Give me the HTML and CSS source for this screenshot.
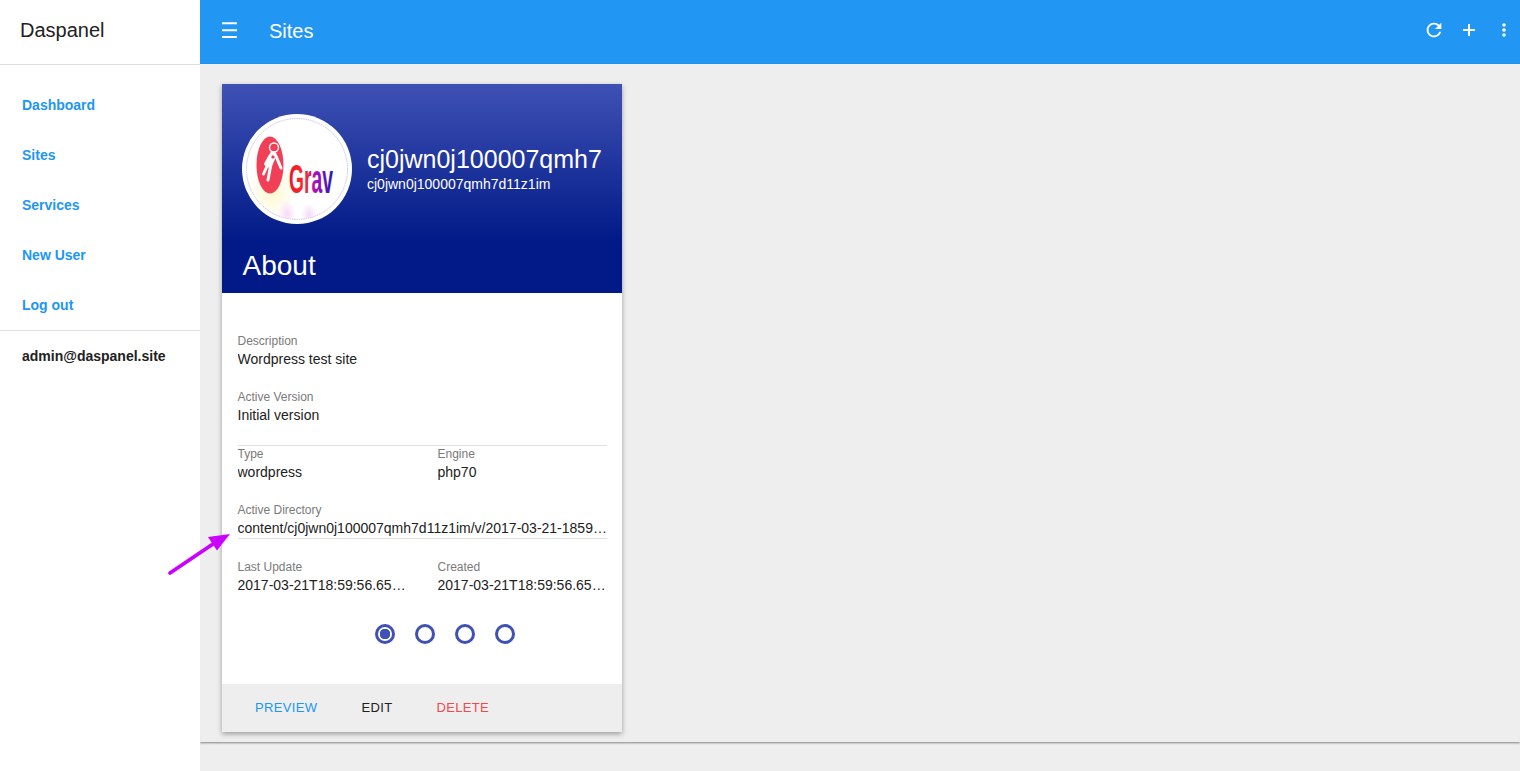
FILE: index.html
```html
<!DOCTYPE html>
<html lang="en">
<head>
<meta charset="utf-8">
<title>Daspanel - Sites</title>
<link rel="stylesheet" href="styles.css">
</head>
<body>
<div class="app">
  <aside class="sidebar">
    <div class="brand">Daspanel</div>
    <nav class="nav">
      <a class="nav-link">Dashboard</a>
      <a class="nav-link">Sites</a>
      <a class="nav-link">Services</a>
      <a class="nav-link">New User</a>
      <a class="nav-link">Log out</a>
    </nav>
    <div class="user">admin@daspanel.site</div>
  </aside>
  <div class="main">
    <header class="topbar">
      <svg class="menu-icon" width="15" height="16" viewBox="0 0 15 16"><path d="M0 1.200h15M0 8.300h15M0 15h15" stroke="#fff" stroke-width="1.900" fill="none"/></svg>
      <h1 class="title">Sites</h1>
      <div class="actions">
        <svg class="action-refresh" width="22" height="22" viewBox="0 0 24 24"><path fill="#fff" d="M17.65 6.35C16.2 4.9 14.21 4 12 4c-4.42 0-7.99 3.58-7.99 8s3.57 8 7.99 8c3.73 0 6.84-2.55 7.73-6h-2.08c-.82 2.33-3.04 4-5.65 4-3.31 0-6-2.69-6-6s2.69-6 6-6c1.66 0 3.14.69 4.22 1.78L13 11h7V4l-2.35 2.35z"/></svg>
        <svg class="action-add" width="12" height="12" viewBox="0 0 12 12"><path d="M0 6h12M6 0v12" stroke="#fff" stroke-width="2" fill="none"/></svg>
        <svg class="action-more" width="4" height="14" viewBox="0 0 4 14"><circle cx="2" cy="2" r="1.800" fill="#fff"/><circle cx="2" cy="7" r="1.800" fill="#fff"/><circle cx="2" cy="12" r="1.800" fill="#fff"/></svg>
      </div>
    </header>
    <section class="content">
      <article class="card">
        <div class="card-head">
          <div class="identity">
            <svg class="avatar" width="110" height="110" viewBox="0 0 110 110">
              <defs>
                <linearGradient id="gravText" x1="0" x2="1" y1="0" y2="0">
                  <stop offset="0" stop-color="#f0142c"/>
                  <stop offset=".35" stop-color="#f5302a"/>
                  <stop offset=".62" stop-color="#a010c8"/>
                  <stop offset="1" stop-color="#2a1aa8"/>
                </linearGradient>
                <radialGradient id="washY"><stop offset="0" stop-color="#fff7c0" stop-opacity=".8"/><stop offset="1" stop-color="#fff7c0" stop-opacity="0"/></radialGradient>
                <radialGradient id="washP"><stop offset="0" stop-color="#f8d4f8" stop-opacity=".9"/><stop offset="1" stop-color="#f8d4f8" stop-opacity="0"/></radialGradient>
                <clipPath id="inner"><circle cx="55" cy="55" r="50"/></clipPath>
              </defs>
              <circle cx="55" cy="55" r="55" fill="#fff"/>
              <g clip-path="url(#inner)">
                <ellipse cx="30" cy="78" rx="24" ry="26" fill="url(#washY)"/>
                <ellipse cx="45" cy="100" rx="9" ry="14" fill="url(#washP)"/>
                <ellipse cx="67" cy="101" rx="8" ry="12" fill="url(#washP)"/>
              </g>
              <circle cx="55" cy="55" r="50.500" fill="none" stroke="#aab0d8" stroke-width=".7" stroke-dasharray="1.500 .8"/>
              <ellipse cx="28" cy="51" rx="13.500" ry="28.500" fill="#f23f58"/>
              <circle cx="32" cy="33.500" r="4.500" fill="none" stroke="#fff" stroke-width="1.400"/>
              <path d="M31 41L27 50" stroke="#fff" stroke-width="7" stroke-linecap="round" fill="none"/>
              <path d="M26 50L21.500 60M29 50L26 66M34 42L39 54M28 42L23.500 50" stroke="#fff" stroke-width="3" stroke-linecap="round" fill="none"/>
              <path d="M31 41l2 2-2 2-2-2z" fill="#f23f58"/>
              <text class="grav" x="47" y="79" textLength="44" lengthAdjust="spacingAndGlyphs" fill="url(#gravText)">Grav</text>
            </svg>
            <div class="names">
              <div class="site-name">cj0jwn0j100007qmh7</div>
              <div class="site-id">cj0jwn0j100007qmh7d11z1im</div>
            </div>
          </div>
          <h2 class="about">About</h2>
        </div>
        <div class="card-body">
          <div class="field">
            <div class="label">Description</div>
            <div class="value">Wordpress test site</div>
          </div>
          <div class="field">
            <div class="label">Active Version</div>
            <div class="value">Initial version</div>
          </div>
          <div class="row row-ruled">
            <div class="field">
              <div class="label">Type</div>
              <div class="value">wordpress</div>
            </div>
            <div class="field">
              <div class="label">Engine</div>
              <div class="value">php70</div>
            </div>
          </div>
          <div class="field field-ruled">
            <div class="label">Active Directory</div>
            <div class="value">content/cj0jwn0j100007qmh7d11z1im/v/2017-03-21-185956-657</div>
          </div>
          <div class="row">
            <div class="field">
              <div class="label">Last Update</div>
              <div class="value">2017-03-21T18:59:56.657Z000</div>
            </div>
            <div class="field">
              <div class="label">Created</div>
              <div class="value">2017-03-21T18:59:56.657Z000</div>
            </div>
          </div>
          <div class="dots">
            <span class="dot dot-on"></span>
            <span class="dot"></span>
            <span class="dot"></span>
            <span class="dot"></span>
          </div>
        </div>
        <div class="card-actions">
          <a class="btn btn-preview">Preview</a>
          <a class="btn btn-edit">Edit</a>
          <a class="btn btn-delete">Delete</a>
        </div>
      </article>
    </section>
  </div>
  <svg class="arrow" width="70" height="50" viewBox="0 0 70 50">
    <path d="M5 43L48 14" stroke="#cc00ff" stroke-width="3.800" stroke-linecap="round" fill="none"/>
    <path d="M65 4L43 7L52 20.500z" fill="#cc00ff"/>
  </svg>
</div>
</body>
</html>
```

FILE: styles.css
```css
* { box-sizing: border-box; }
html, body { margin: 0; height: 100%; }
body {
  font-family: "Liberation Sans", Arial, sans-serif;
  background: #eeeeee;
  color: #212121;
  overflow: hidden;
}
.app { display: flex; height: 771px; position: relative; }

.sidebar { width: 200px; flex: none; background: #fff; position: relative; z-index: 1; }
.brand {
  height: 65px;
  padding-left: 20px;
  font-size: 20px;
  line-height: 61px;
  border-bottom: 1px solid #e0e0e0;
}
.nav {
  padding-top: 15px;
  border-bottom: 1px solid #e0e0e0;
}
.nav-link {
  display: block;
  height: 50px;
  line-height: 50px;
  padding-left: 22px;
  font-size: 14px;
  font-weight: 700;
  color: #2196f3;
}
.user {
  padding-left: 22px;
  font-size: 14px;
  font-weight: 700;
  line-height: 50px;
}

.main { flex: 1; min-width: 0; display: flex; flex-direction: column; }
.topbar {
  height: 64px;
  flex: none;
  background: #2196f3;
  color: #fff;
  display: flex;
  align-items: center;
  padding-left: 22px;
}
.menu-icon { flex: none; margin-bottom: 4px; }
.title { margin: 0 0 0 32px; font-size: 20px; font-weight: 400; line-height: 62px; height: 64px; }
.actions { margin-left: auto; display: flex; align-items: center; padding: 0 14px 4px 0; }
.action-refresh { margin-right: 18px; }
.action-add { margin-right: 27px; }

.content {
  padding: 20px 22px 10px;
  background: #eeeeee;
  box-shadow: 0 1px 2px rgba(0, 0, 0, .45);
}
.card {
  width: 400px;
  background: #fff;
  box-shadow: 0 2px 5px rgba(0, 0, 0, .35);
}
.card-head {
  height: 209px;
  padding: 30px 20px 0;
  color: #fff;
  background: linear-gradient(to bottom, #3f51b5 0%, #011a87 75%, #011a87 100%);
}
.identity { display: flex; align-items: center; gap: 15px; }
.avatar { flex: none; }
.grav { font-family: "Liberation Sans", Arial, sans-serif; font-size: 41px; font-weight: 700; }
.names { margin-bottom: 2px; }
.site-name { font-size: 25px; line-height: 29px; white-space: nowrap; }
.site-id { font-size: 14px; line-height: 16px; margin-top: 2px; white-space: nowrap; }
.about { margin: 21px 0 0; padding-left: .5px; font-size: 28px; font-weight: 400; line-height: 42px; }

.card-body { height: 391px; padding: 40px 15px 0 15.500px; }
.field { margin-bottom: 20px; min-width: 0; }
.label { font-size: 12px; line-height: 16px; color: #7a7a7a; }
.value {
  font-size: 14px;
  line-height: 20px;
  color: #212121;
  white-space: nowrap;
  overflow: hidden;
  text-overflow: ellipsis;
}
.row { display: grid; grid-template-columns: 200px 170px; }
.row .field:first-child { padding-right: 30px; }
.row-ruled { border-top: 1px solid #e0e0e0; }
.field-ruled { border-bottom: 1px solid #e0e0e0; }

.dots { display: flex; justify-content: center; gap: 20px; padding: 9px 0 0 46px; }
.dot {
  width: 20px;
  height: 20px;
  border: 3px solid #3f51b5;
  border-radius: 50%;
  display: block;
}
.dot-on { background: radial-gradient(circle, #3f51b5 0 5px, #fff 5.500px); }

.card-actions {
  height: 48px;
  background: #eeeeee;
  display: flex;
  align-items: center;
  padding: 0 0 2px 33px;
  gap: 44px;
}
.btn { font-size: 13px; letter-spacing: .35px; text-transform: uppercase; }
.btn-preview { color: #2196f3; }
.btn-edit { color: #212121; }
.btn-delete { color: #f04a50; }

.arrow { position: absolute; left: 165px; top: 530px; z-index: 2; }
```
